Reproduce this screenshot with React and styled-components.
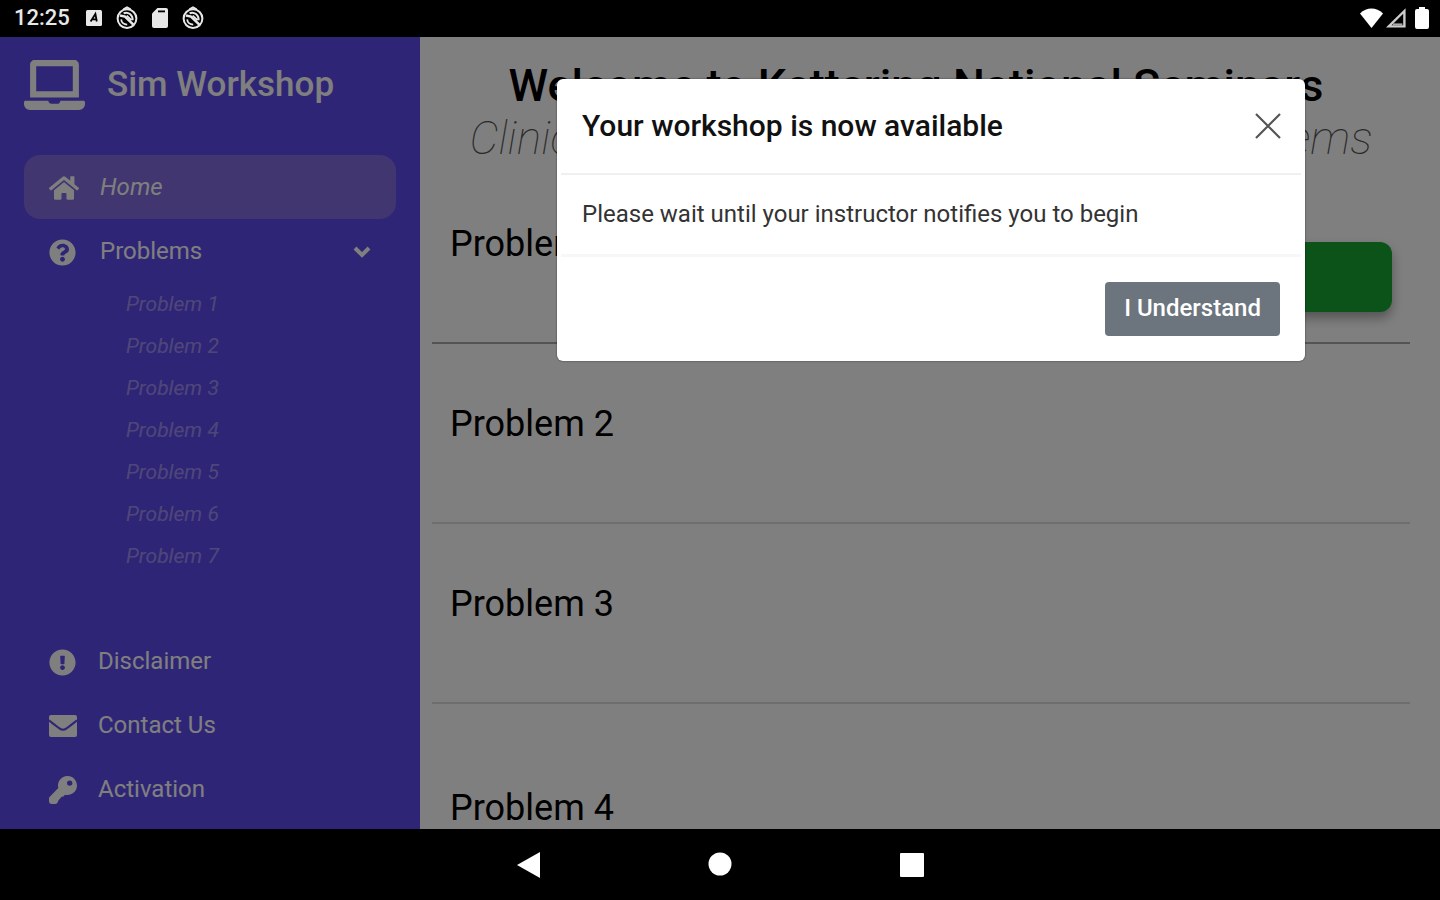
import React, { useState } from 'react';
import styled, { createGlobalStyle } from 'styled-components';
import {
  FaHome,
  FaLaptop,
  FaQuestionCircle,
  FaExclamationCircle
} from 'react-icons/fa';

const GlobalStyle = createGlobalStyle`
  * {
    box-sizing: border-box;
  }

  body {
    margin: 0;
    background: #000;
    font-family: Roboto, "Liberation Sans", sans-serif;
  }
`;

const Device = styled.div`
  display: flex;
  flex-direction: column;
  height: 100vh;
  overflow: hidden;
`;

const StatusBar = styled.header`
  display: flex;
  align-items: center;
  justify-content: space-between;
  flex: none;
  height: 37px;
  padding: 0 11px 1px 14px;
  background: #000;
  color: #e8e8e8;
`;

const StatusGroup = styled.div`
  display: flex;
  align-items: center;
  gap: ${props => props.$gap}px;
`;

const Clock = styled.time`
  margin-right: 3px;
  font-size: 22px;
  font-weight: 500;
  line-height: 24px;
`;

const Screen = styled.div`
  position: relative;
  display: grid;
  grid-template-columns: 420px 1fr;
  flex: 1;
  min-height: 0;
`;

const Sidebar = styled.aside`
  display: flex;
  flex-direction: column;
  min-height: 0;
  padding: 22px 24px 8px;
  background: #5e4aec;
  color: #fff;
`;

const Brand = styled.div`
  display: flex;
  align-items: center;
  gap: 22px;
  margin-bottom: 44px;
  font-size: 35px;
  font-weight: 500;
  line-height: 52px;

  svg {
    width: 61px;
    height: 50px;
  }
`;

const NavList = styled.ul`
  margin: 0;
  padding: 0;
  list-style: none;
`;

const FooterList = styled(NavList)`
  margin-top: auto;
`;

const NavLink = styled.a`
  display: flex;
  align-items: center;
  height: 64px;
  padding: 0 25px;
  border-radius: 16px;
  background: ${props => (props.$active ? '#826cde' : 'transparent')};
  color: #fff;
  font-size: 24px;
  font-style: ${props => (props.$active ? 'italic' : 'normal')};
  line-height: 30px;
  text-decoration: none;
`;

const NavIcon = styled.span`
  display: flex;
  width: ${props => (props.$narrow ? 49 : 51)}px;
  padding-top: 2px;
  font-size: ${props => (props.$large ? 30 : 27)}px;
`;

const Caret = styled.svg`
  width: 18px;
  height: 12px;
  margin: 2px 0 0 auto;
`;

const SubLink = styled.a`
  display: block;
  padding-left: 102px;
  color: rgba(255, 255, 255, 0.4);
  font-size: 21px;
  font-style: italic;
  line-height: 42px;
  text-decoration: none;
`;

const Main = styled.main`
  min-width: 0;
  overflow: hidden;
  padding: 23px 30px 0 12px;
  background: #fff;
  color: #000;
`;

const Title = styled.h1`
  margin: 0;
  padding-right: 10px;
  font-size: 45px;
  font-weight: 500;
  line-height: 52px;
  text-align: center;
  white-space: nowrap;
`;

const Subtitle = styled.p`
  margin: 0;
  color: #555;
  font-size: 46px;
  font-style: italic;
  font-weight: 100;
  line-height: 52px;
  text-align: center;
  white-space: nowrap;
`;

const ProblemRow = styled.section`
  display: flex;
  align-items: flex-start;
  justify-content: space-between;
  height: 180px;
  padding: ${props => (props.$last ? 76 : 52)}px 18px 0;
  border-bottom: 2px solid ${props => (props.$current ? '#a8a8a8' : '#dcdcdc')};
`;

const ProblemName = styled.h2`
  margin: 0;
  font-size: 36px;
  font-weight: 400;
  line-height: 56px;
`;

const StartButton = styled.button`
  width: 280px;
  height: 70px;
  margin-top: 26px;
  border: none;
  border-radius: 12px;
  background: #18a632;
  box-shadow: 0 6px 12px rgba(0, 0, 0, 0.35);
  color: #fff;
  font-family: inherit;
  font-size: 24px;
`;

const Overlay = styled.div`
  position: absolute;
  inset: 0;
  display: flex;
  align-items: flex-start;
  justify-content: center;
  padding: 42px 0 0 422px;
  background: rgba(0, 0, 0, 0.5);
`;

const Dialog = styled.div`
  width: 100%;
  max-width: 748px;
  padding: 0 4px;
  border-radius: 6px;
  background: #fff;
  box-shadow: 0 0 2px rgba(0, 0, 0, 0.6);
`;

const DialogHeader = styled.div`
  display: flex;
  align-items: center;
  justify-content: space-between;
  height: 96px;
  padding: 0 20px 0 21px;
  border-bottom: 2px solid #f0f0f0;
`;

const DialogTitle = styled.h3`
  margin: 0;
  color: #111;
  font-size: 30px;
  font-weight: 500;
  line-height: 36px;
`;

const CloseButton = styled.button`
  display: flex;
  padding: 0;
  border: none;
  background: none;
  color: #555;
`;

const DialogBody = styled.p`
  margin: 0;
  padding: 19px 21px 20px;
  border-bottom: 3px solid #f7f7f7;
  color: #333;
  font-size: 24px;
  line-height: 40px;
`;

const DialogFooter = styled.div`
  display: flex;
  justify-content: flex-end;
  padding: 25px 21px;
`;

const ConfirmButton = styled.button`
  height: 54px;
  padding: 0 19px 2px;
  border: none;
  border-radius: 4px;
  background: #6c757d;
  color: #fff;
  font-family: inherit;
  font-size: 24px;
  font-weight: 500;
  line-height: 30px;
`;

const SystemNav = styled.nav`
  display: flex;
  align-items: center;
  justify-content: center;
  gap: 164px;
  flex: none;
  height: 71px;
  background: #000;
`;

const SystemButton = styled.button`
  display: flex;
  padding: 0;
  border: none;
  background: none;
  color: #fff;
`;

const KeyboardIcon = () => (
  <svg width="16" height="18" viewBox="0 0 16 18" aria-hidden="true">
    <rect x="0" y="1" width="16" height="16" rx="1.5" fill="currentColor" />
    <path d="M4.6 12.5 9.4 5l1.4 7.5M6.4 10.4h4" fill="none" stroke="#000" strokeWidth="1.8" />
  </svg>
);

const DebugIcon = () => (
  <svg width="24" height="24" viewBox="0 0 24 24" fill="none" stroke="currentColor" aria-hidden="true">
    <path d="M8.4 3.4 12 1.4l3.6 2" strokeWidth="2" />
    <circle cx="12" cy="12.6" r="9.4" strokeWidth="2" />
    <path d="m5 9.4 5 1.2 8.4 8" strokeWidth="2.6" />
    <path d="M8.6 7.2c4.6-1.8 9.4 1.6 9 7" strokeWidth="2" />
    <path d="M6.2 13.4c.2 3 2.6 5.2 6 5.2M11.6 9.6l5 4.6" strokeWidth="1.8" />
  </svg>
);

const SdCardIcon = () => (
  <svg width="16" height="20" viewBox="0 0 16 20" aria-hidden="true">
    <path d="M5.4 0H14a2 2 0 0 1 2 2v16a2 2 0 0 1-2 2H2a2 2 0 0 1-2-2V5.6z" fill="currentColor" />
    <path d="M6 3.4h7" stroke="#000" strokeWidth="1.8" />
  </svg>
);

const WifiIcon = () => (
  <svg width="23" height="20" viewBox="0 0 23 20" aria-hidden="true">
    <path d="M0 5.6C6.6-1.2 16.4-1.2 23 5.6L11.5 20z" fill="#fff" />
  </svg>
);

const SignalIcon = () => (
  <svg width="20" height="20" viewBox="0 0 20 20" aria-hidden="true">
    <path d="M2.8 18.4 18.4 3v15.4z" fill="none" stroke="#ccc" strokeWidth="2.4" />
    <path d="M7 16.4h9.4" fill="none" stroke="#aaa" strokeWidth="2" />
  </svg>
);

const BatteryIcon = () => (
  <svg width="20" height="22" viewBox="-6 0 20 22" aria-hidden="true">
    <path d="M4 0h6v2h2a2 2 0 0 1 2 2v16a2 2 0 0 1-2 2H2a2 2 0 0 1-2-2V4a2 2 0 0 1 2-2h2z" fill="#fff" />
  </svg>
);

const EnvelopeIcon = () => (
  <svg width="28" height="22" viewBox="0 0 28 22" aria-hidden="true">
    <rect x="0" y="0" width="28" height="22" rx="2" fill="currentColor" />
    <path d="M0 5.4c4 3.2 7.6 6 10.4 8 2.6 1.9 4.6 1.9 7.2 0 2.8-2 6.4-4.8 10.4-8" fill="none" stroke="#5e4aec" strokeWidth="2" />
  </svg>
);

const KeyIcon = () => (
  <svg width="28" height="28" viewBox="0 0 28 28" aria-hidden="true">
    <path
      d="M18.5 0a9.5 9.5 0 1 1-2.4 18.7L14.4 20.4 12.6 20.8 9.4 24.4 8.6 26.4A3.4 3.4 0 0 1 6 28H2.4A2.4 2.4 0 0 1 0 25.6V22.6c0-.8.3-1.4.8-1.9L9.3 12A9.5 9.5 0 0 1 18.5 0zm2.2 4.4a2.7 2.7 0 1 0 0 5.4 2.7 2.7 0 0 0 0-5.4z"
      fill="currentColor"
      fillRule="evenodd"
    />
  </svg>
);

const problems = [1, 2, 3, 4, 5, 6, 7];

const App = () => {
  const [isOpen, setIsOpen] = useState(true);

  const closeDialog = () => setIsOpen(false);

  return (
    <Device>
      <GlobalStyle />
      <StatusBar>
        <StatusGroup $gap={13}>
          <Clock>12:25</Clock>
          <KeyboardIcon />
          <DebugIcon />
          <SdCardIcon />
          <DebugIcon />
        </StatusGroup>
        <StatusGroup $gap={3}>
          <WifiIcon />
          <SignalIcon />
          <BatteryIcon />
        </StatusGroup>
      </StatusBar>

      <Screen>
        <Sidebar>
          <Brand>
            <FaLaptop preserveAspectRatio="none" />
            <span>Sim Workshop</span>
          </Brand>
          <NavList>
            <li>
              <NavLink href="#home" $active>
                <NavIcon $large><FaHome /></NavIcon>
                Home
              </NavLink>
            </li>
            <li>
              <NavLink href="#problems">
                <NavIcon><FaQuestionCircle /></NavIcon>
                Problems
                <Caret viewBox="0 0 18 12" fill="none" stroke="currentColor" strokeWidth="4">
                  <path d="m2 2 7 7 7-7" />
                </Caret>
              </NavLink>
              <NavList>
                {problems.map(n => (
                  <li key={n}>
                    <SubLink href={`#problem-${n}`}>Problem {n}</SubLink>
                  </li>
                ))}
              </NavList>
            </li>
          </NavList>
          <FooterList>
            <li>
              <NavLink href="#disclaimer">
                <NavIcon $narrow><FaExclamationCircle /></NavIcon>
                Disclaimer
              </NavLink>
            </li>
            <li>
              <NavLink href="#contact">
                <NavIcon $narrow><EnvelopeIcon /></NavIcon>
                Contact Us
              </NavLink>
            </li>
            <li>
              <NavLink href="#activation">
                <NavIcon $narrow><KeyIcon /></NavIcon>
                Activation
              </NavLink>
            </li>
          </FooterList>
        </Sidebar>

        <Main>
          <Title>Welcome to Kettering National Seminars</Title>
          <Subtitle>Clinical Simulation Workshop Review Problems</Subtitle>
          {problems.slice(0, 4).map(n => (
            <ProblemRow key={n} $current={n === 1} $last={n === 4}>
              <ProblemName>Problem {n}</ProblemName>
              {n === 1 && <StartButton type="button">Start</StartButton>}
            </ProblemRow>
          ))}
        </Main>

        {isOpen && (
          <Overlay>
            <Dialog role="dialog" aria-modal="true" aria-labelledby="dialog-title">
              <DialogHeader>
                <DialogTitle id="dialog-title">Your workshop is now available</DialogTitle>
                <CloseButton type="button" aria-label="Close" onClick={closeDialog}>
                  <svg width="26" height="26" viewBox="0 0 26 26" stroke="currentColor" strokeWidth="2.2">
                    <path d="m1 1 24 24M25 1 1 25" />
                  </svg>
                </CloseButton>
              </DialogHeader>
              <DialogBody>Please wait until your instructor notifies you to begin</DialogBody>
              <DialogFooter>
                <ConfirmButton type="button" onClick={closeDialog}>I Understand</ConfirmButton>
              </DialogFooter>
            </Dialog>
          </Overlay>
        )}
      </Screen>

      <SystemNav>
        <SystemButton type="button" aria-label="Back">
          <svg width="28" height="26" viewBox="0 0 28 26">
            <path d="M26 0v26L3 13z" fill="currentColor" />
          </svg>
        </SystemButton>
        <SystemButton type="button" aria-label="Home">
          <svg width="28" height="26" viewBox="0 0 28 26">
            <circle cx="14" cy="12" r="11.5" fill="currentColor" />
          </svg>
        </SystemButton>
        <SystemButton type="button" aria-label="Recent apps">
          <svg width="28" height="26" viewBox="0 0 28 26">
            <rect x="2" y="1" width="24" height="24" rx="1" fill="currentColor" />
          </svg>
        </SystemButton>
      </SystemNav>
    </Device>
  );
};

export default App;
